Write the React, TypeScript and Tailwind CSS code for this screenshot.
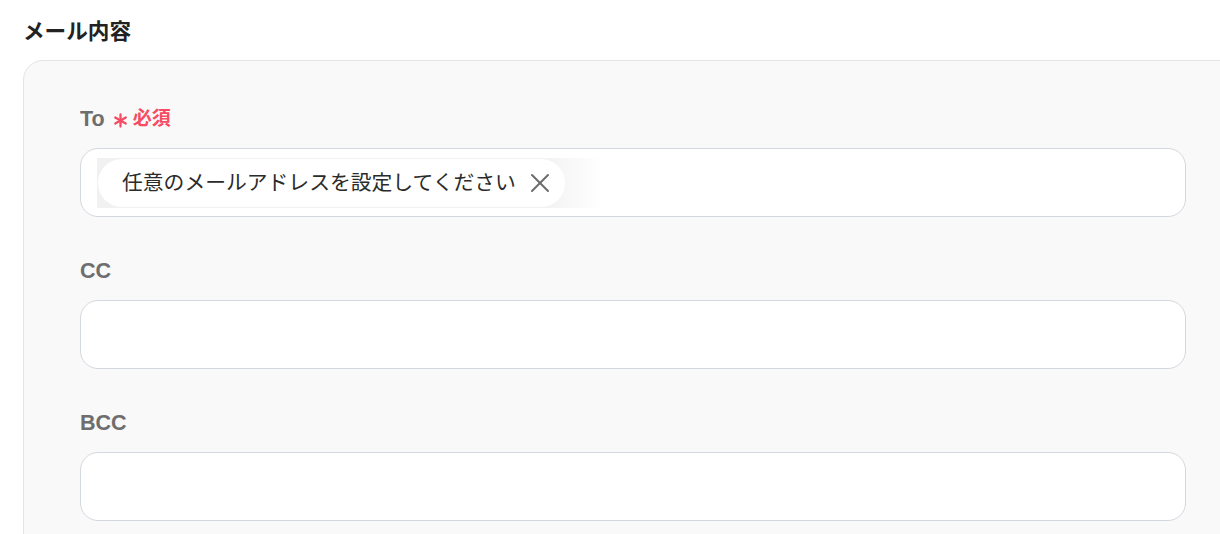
import * as React from "react";

const FIELDS = [
  { id: "to", label: "To", required: true, value: "任意のメールアドレスを設定してください" },
  { id: "cc", label: "CC", required: false, value: "" },
  { id: "bcc", label: "BCC", required: false, value: "" },
];

const jp = { fontFamily: '"Liberation Sans", "Noto Sans CJK JP", sans-serif' };

function RequiredMark() {
  return (
    <span className="flex items-center gap-[5px] text-[#f64b63]">
      <svg width="15" height="15" viewBox="0 0 16 16" className="mt-[3px]">
        <g stroke="currentColor" strokeWidth="2.4" strokeLinecap="round">
          <line x1="8" y1="1.5" x2="8" y2="14.5" />
          <line x1="2.4" y1="4.8" x2="13.6" y2="11.2" />
          <line x1="2.4" y1="11.2" x2="13.6" y2="4.8" />
        </g>
      </svg>
      <span className="text-[19px] font-bold">必須</span>
    </span>
  );
}

function Chip({ text }: { text: string }) {
  return (
    <div className="flex bg-linear-to-r from-[#f1f1f1] from-88% to-transparent p-[1px] pr-[36px]">
      <div className="flex h-[48px] items-center gap-[14px] rounded-full bg-white pl-[24px] pr-[15px]">
        <span className="text-[20.8px] text-[#2b2b2b]">{text}</span>
        <svg width="20" height="20" viewBox="0 0 20 20">
          <g stroke="#6b6b6b" strokeWidth="2" strokeLinecap="round">
            <line x1="2" y1="2" x2="18" y2="18" />
            <line x1="18" y1="2" x2="2" y2="18" />
          </g>
        </svg>
      </div>
    </div>
  );
}

export default function App() {
  return (
    <div className="h-[534px] w-[1220px] overflow-hidden bg-white pl-[23px] pt-[16px]" style={jp}>
      <h2 className="h-[32px] text-[21.6px] font-bold leading-[32px] text-[#222]">メール内容</h2>

      <div className="mt-[12px] w-[1220px] rounded-tl-[20px] border border-[#e4e4e4] bg-[#f9f9f9] pl-[56px] pr-[56px] pt-[44px] pb-10">
        <div className="flex flex-col gap-[40px]">
          {FIELDS.map((f) => (
            <div key={f.id} className="flex flex-col gap-[15px]">
              <div className="flex h-[28px] items-center gap-[8px]">
                <span className="text-[21.5px] font-bold text-[#6e6e6e]">{f.label}</span>
                {f.required && <RequiredMark />}
              </div>
              <div className="flex h-[69px] items-center rounded-[18px] border border-[#d3d7de] bg-white pl-[16px]">
                {f.value && <Chip text={f.value} />}
              </div>
            </div>
          ))}
        </div>
      </div>
    </div>
  );
}
